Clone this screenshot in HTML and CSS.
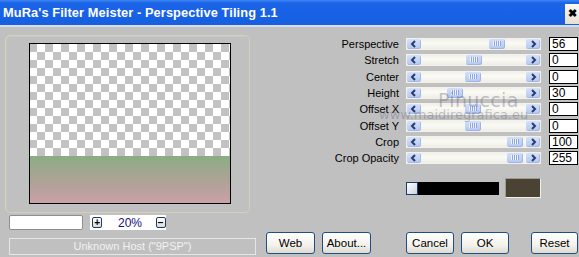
FILE: index.html
```html
<!DOCTYPE html>
<html>
<head>
	<title>MuRa's Filter Meister - Perspective Tiling 1.1</title>
	<meta charset="utf-8">
	<link rel="stylesheet" href="styles.css">
</head>
<body>
  <div class="window">
    <div class="titlebar">
      <span class="title">MuRa's Filter Meister - Perspective Tiling 1.1</span>
      <span class="close">&#10006;</span>
    </div>
    <div class="client">
      <!-- left: preview -->
      <div class="left">
        <div class="groupbox">
          <div class="preview">
            <div class="checker"></div>
            <div class="floor"></div>
          </div>
        </div>
        <div class="zoom-row">
          <div class="zoom-input"></div>
          <div class="zoom-box">
            <span class="zbtn">+</span>
            <span class="zval">20%</span>
            <span class="zbtn">&minus;</span>
          </div>
        </div>
        <div class="status">Unknown Host ("9PSP")</div>
      </div>
      <!-- right: controls -->
      <div class="right">
        <div class="sliders">
          <label>Perspective</label>
          <div class="scroll"><span class="arrow l"></span><span class="track"><span class="thumb" style="margin-left:68px"></span></span><span class="arrow r"></span></div>
          <div class="val">56</div>

          <label>Stretch</label>
          <div class="scroll"><span class="arrow l"></span><span class="track"><span class="thumb" style="margin-left:45px"></span></span><span class="arrow r"></span></div>
          <div class="val">0</div>

          <label>Center</label>
          <div class="scroll"><span class="arrow l"></span><span class="track"><span class="thumb" style="margin-left:44px"></span></span><span class="arrow r"></span></div>
          <div class="val">0</div>

          <label>Height</label>
          <div class="scroll"><span class="arrow l"></span><span class="track"><span class="thumb" style="margin-left:26px"></span></span><span class="arrow r"></span></div>
          <div class="val">30</div>

          <label>Offset X</label>
          <div class="scroll"><span class="arrow l"></span><span class="track"><span class="thumb" style="margin-left:44px"></span></span><span class="arrow r"></span></div>
          <div class="val">0</div>

          <label>Offset Y</label>
          <div class="scroll"><span class="arrow l"></span><span class="track"><span class="thumb" style="margin-left:44px"></span></span><span class="arrow r"></span></div>
          <div class="val">0</div>

          <label>Crop</label>
          <div class="scroll"><span class="arrow l"></span><span class="track"><span class="thumb" style="margin-left:86px"></span></span><span class="arrow r"></span></div>
          <div class="val">100</div>

          <label>Crop Opacity</label>
          <div class="scroll"><span class="arrow l"></span><span class="track"><span class="thumb" style="margin-left:86px"></span></span><span class="arrow r"></span></div>
          <div class="val">255</div>
        </div>
        <div class="color-row">
          <span class="color-knob"></span>
          <span class="color-bar"></span>
          <span class="color-swatch"></span>
        </div>
        <div class="buttons">
          <button class="btn w49">Web</button>
          <button class="btn w49">About...</button>
          <button class="btn w48 cancel">Cancel</button>
          <button class="btn w48">OK</button>
          <button class="btn w47 reset">Reset</button>
        </div>
      </div>
    </div>
    <!-- watermark over the sliders -->
    <div class="wm wm-name">Pinuccia</div>
    <div class="wm wm-url">www.maidiregrafica.eu</div>
  </div>
</body>
</html>
```

FILE: styles.css
```css
html, body{
	margin: 0;
	padding: 0;
}
body{
	width: 579px;
	height: 257px;
	overflow: hidden;
	background: #c0c0c0;
	font-family: "Liberation Sans", Arial, sans-serif;
	font-size: 11px;
}
.window{
	position: relative;
	width: 579px;
	height: 257px;
	background: #c0c0c0;
}
.titlebar{
	display: flex;
	align-items: center;
	height: 25px;
	background: linear-gradient(#3d86f4 0, #1b64e8 3px, #1660e4 20px, #1a5fd8 25px);
	border-bottom: 2px solid #d6dff2;
	box-sizing: content-box;
}
.title{
	flex: 1;
	padding-left: 3px;
	color: #fff;
	font-weight: bold;
	font-size: 12.8px;
	letter-spacing: 0.1px;
}
.close{
	display: flex;
	align-items: center;
	justify-content: center;
	width: 14px;
	height: 20px;
	margin-top: 2px;
	background: linear-gradient(#fbfaf4, #e4e0d2);
	color: #000;
	font-size: 11px;
	font-weight: bold;
}
.client{
	display: flex;
}

/* left column */
.left{
	width: 262px;
}
.groupbox{
	width: 243px;
	height: 176px;
	margin: 8px 0 0 5px;
	border: 1px solid #d3d0bd;
	border-radius: 5px;
	box-shadow: inset 1px 1px 0 #cac8bb;
}
.preview{
	display: flex;
	flex-direction: column;
	width: 200px;
	height: 159px;
	margin: 7px 0 0 23px;
	border: 1px solid #000;
	background: #fff;
}
.checker{
	height: 112px;
	background-color: #fff;
	background-image:
		linear-gradient(45deg, #c2c2c2 25%, transparent 25%, transparent 75%, #c2c2c2 75%),
		linear-gradient(45deg, #c2c2c2 25%, transparent 25%, transparent 75%, #c2c2c2 75%);
	background-size: 16px 16px;
	background-position: 7px 0, 15px 8px;
}
.floor{
	flex: 1;
	background: linear-gradient(#89ad85 0, #9fa78f 30%, #b8a19d 70%, #c9a2a7 100%);
}
.zoom-row{
	display: flex;
	align-items: center;
	height: 15px;
	margin: 2px 0 0 9px;
	gap: 7px;
}
.zoom-input{
	width: 72px;
	height: 13px;
	background: #fff;
	border: 1px solid #8d8d8d;
	border-radius: 2px;
}
.zoom-box{
	display: flex;
	align-items: center;
	width: 76px;
	height: 15px;
	background: #fff;
}
.zbtn{
	display: flex;
	align-items: center;
	justify-content: center;
	width: 9px;
	height: 9px;
	margin-left: 2px;
	border: 1px solid #1c3a6e;
	border-radius: 2px;
	background: linear-gradient(#ffffff, #dcdcd4);
	font-size: 10px;
	font-weight: bold;
	line-height: 1;
	color: #000;
}
.zval{
	width: 50px;
	padding-left: 4px;
	text-align: center;
	font-size: 12px;
	color: #101080;
}
.status{
	width: 245px;
	height: 15px;
	margin: 8px 0 0 9px;
	border: 1px solid #e6e6e6;
	color: #f2f2f2;
	font-size: 11px;
	line-height: 15px;
	text-align: center;
}

/* right column */
.right{
	flex: 1;
}
.sliders{
	display: grid;
	grid-template-columns: 137px 135px 30px;
	grid-auto-rows: 16.3px;
	column-gap: 7px;
	margin-top: 9px;
	align-items: center;
}
.sliders label{
	text-align: right;
	font-size: 11px;
	line-height: 14px;
	color: #000;
}
.sliders .val{
	grid-column: 3;
	box-sizing: border-box;
	height: 14px;
	margin-left: 1px;
	padding-left: 2px;
	background: #fff;
	border: 1px solid #000;
	font-size: 12px;
	line-height: 12px;
}
.scroll{
	display: flex;
	height: 12px;
	box-sizing: border-box;
	border: 1px solid #f2f1ea;
	background: linear-gradient(#f1f0e8, #fbfbf6 40%, #eeede5);
}
.arrow{
	width: 14px;
	height: 10px;
	border-radius: 2px;
	background-color: #bccef5;
	background-image: linear-gradient(#d6e2fb, #b4c8f2);
	background-repeat: no-repeat;
	box-shadow: inset -1px -1px 0 #a4b8e4;
}
.arrow.l{
	background-image:
		url("data:image/svg+xml;utf8,<svg xmlns='http://www.w3.org/2000/svg' width='14' height='10'><path d='M8 2 L5 5 L8 8' fill='none' stroke='%23283c70' stroke-width='2'/></svg>"),
		linear-gradient(#d6e2fb, #b4c8f2);
}
.arrow.r{
	margin-left: auto;
	background-image:
		url("data:image/svg+xml;utf8,<svg xmlns='http://www.w3.org/2000/svg' width='14' height='10'><path d='M6 2 L9 5 L6 8' fill='none' stroke='%23283c70' stroke-width='2'/></svg>"),
		linear-gradient(#d6e2fb, #b4c8f2);
}
.track{
	display: flex;
	flex: 1;
	height: 10px;
}
.thumb{
	width: 16px;
	height: 10px;
	border-radius: 2px;
	background-color: #c4d4f8;
	background-image:
		repeating-linear-gradient(90deg, #eef3fe 0, #eef3fe 1px, #8fa6d8 1px, #8fa6d8 2px),
		linear-gradient(#d2defa, #b6c9f3);
	background-size: 8px 5px, 100% 100%;
	background-position: 4px 2px, 0 0;
	background-repeat: no-repeat;
	box-shadow: inset -1px -1px 0 #9fb4e2;
}
.color-row{
	display: flex;
	align-items: center;
	height: 20px;
	margin: 12px 0 0 144px;
}
.color-knob{
	box-sizing: border-box;
	width: 12px;
	height: 13px;
	border: 1px solid #1c3a6e;
	background: linear-gradient(135deg, #ffffff, #c9d4de);
}
.color-bar{
	width: 81px;
	height: 13px;
	background: #000;
}
.color-swatch{
	box-sizing: border-box;
	width: 36px;
	height: 20px;
	margin-left: 6px;
	border: 1px solid #f2efe6;
	border-top-color: #9e9a8c;
	border-left-color: #9e9a8c;
	background: #4a4232;
}
.buttons{
	display: flex;
	margin: 34px 0 0 4px;
}
.btn{
	box-sizing: border-box;
	height: 22px;
	margin-right: 7px;
	padding: 0;
	border: 1px solid #1d4f86;
	border-radius: 3px;
	background: linear-gradient(#ffffff, #f3f2ec 60%, #dedbcf);
	font-family: "Liberation Sans", Arial, sans-serif;
	font-size: 11.5px;
	color: #000;
}
.w49{ width: 49px; }
.w48{ width: 48px; }
.w47{ width: 47px; }
.cancel{ margin-left: 28px; }
.reset{ margin-left: 15px; margin-right: 0; }

/* watermark */
.wm{
	position: absolute;
	color: rgba(90, 90, 120, 0.35);
	font-family: "DejaVu Sans", sans-serif;
	white-space: nowrap;
	pointer-events: none;
}
.wm-name{
	left: 438px;
	top: 89px;
	font-size: 19px;
	letter-spacing: 0.3px;
}
.wm-url{
	left: 379px;
	top: 107px;
	font-size: 13px;
}
```
